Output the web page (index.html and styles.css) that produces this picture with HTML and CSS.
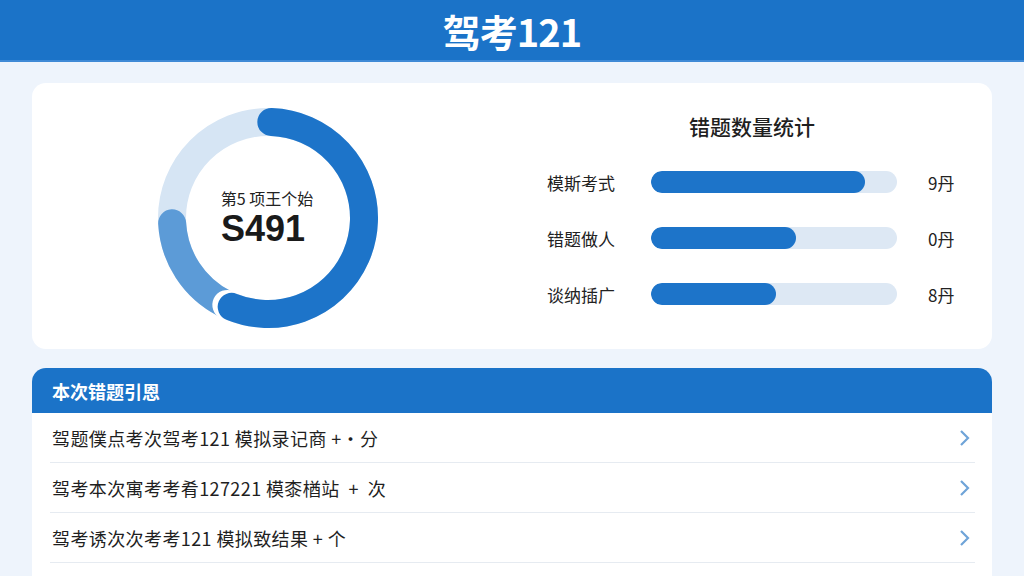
FILE: index.html
```html
<!DOCTYPE html>
<html lang="zh-CN">
<head>
  <meta charset="UTF-8">
  <meta name="viewport" content="width=device-width, initial-scale=1.0">
  <title>驾考121</title>
  <link rel="stylesheet" href="styles.css">
</head>
<body>
  <header class="topbar">
    <h1>驾考121</h1>
  </header>

  <main class="page">
    <section class="card summary">
      <div class="donut">
        <svg width="220" height="220" viewBox="0 0 220 220">
          <circle cx="110" cy="110" r="96" fill="none" stroke="#d6e5f4" stroke-width="28"/>
          <circle cx="110" cy="110" r="96" fill="none" stroke="#5c9bd7" stroke-width="28"
                  stroke-linecap="round" stroke-dasharray="100 603.2" transform="rotate(117 110 110)"/>
          <circle cx="110" cy="110" r="96" fill="none" stroke="#ffffff" stroke-width="30"
                  stroke-linecap="round" stroke-dasharray="0.1 603.2" transform="rotate(115 110 110)"/>
          <circle cx="110" cy="110" r="96" fill="none" stroke="#1d74c9" stroke-width="28"
                  stroke-linecap="round" stroke-dasharray="335 603.2" transform="rotate(-88 110 110)"/>
        </svg>
        <div class="donut-label">
          <span class="donut-sub">第5 项王个始</span>
          <span class="donut-num">S491</span>
        </div>
      </div>

      <div class="stats">
        <h2>错题数量统计</h2>
        <div class="stat-row">
          <span class="stat-name">模斯考式</span>
          <div class="bar"><div class="bar-fill" style="width: 87%"></div></div>
          <span class="stat-val">9丹</span>
        </div>
        <div class="stat-row">
          <span class="stat-name">错题做人</span>
          <div class="bar"><div class="bar-fill" style="width: 59%"></div></div>
          <span class="stat-val">0丹</span>
        </div>
        <div class="stat-row">
          <span class="stat-name">谈纳插广</span>
          <div class="bar"><div class="bar-fill" style="width: 51%"></div></div>
          <span class="stat-val">8丹</span>
        </div>
      </div>
    </section>

    <section class="card review">
      <div class="review-head">本次错题引恩</div>
      <ul class="review-list">
        <li>
          <span>驾题僕点考次驾考121 模拟录记商 +·分</span>
          <svg class="chev" width="12" height="18" viewBox="0 0 12 18"><polyline points="2,2 9,9 2,16" fill="none" stroke="#6fa4d8" stroke-width="2.2"/></svg>
        </li>
        <li>
          <span>驾考本次寓考考肴127221 模桼楢站 &nbsp;+ &nbsp;次</span>
          <svg class="chev" width="12" height="18" viewBox="0 0 12 18"><polyline points="2,2 9,9 2,16" fill="none" stroke="#6fa4d8" stroke-width="2.2"/></svg>
        </li>
        <li>
          <span>驾考诱次次考考121 模拟致结果 + 个</span>
          <svg class="chev" width="12" height="18" viewBox="0 0 12 18"><polyline points="2,2 9,9 2,16" fill="none" stroke="#6fa4d8" stroke-width="2.2"/></svg>
        </li>
        <li><span>&nbsp;</span></li>
      </ul>
    </section>
  </main>
</body>
</html>
```

FILE: styles.css
```css
* { box-sizing: border-box; }
html, body { margin: 0; height: 100%; overflow: hidden; }
body { background: #eef4fc; font-family: "Noto Sans CJK SC", "Noto Sans", sans-serif; color: #1f1f1f; }

.topbar { height: 62px; background: #1b73c8; border-bottom: 2px solid #3f8ad6; display: flex; align-items: center; justify-content: center; }
.topbar h1 { margin: 0; color: #fff; font-size: 38px; font-weight: 700; letter-spacing: -1px; }

.page { padding: 21px 32px 0; }
.card { background: #fff; border-radius: 14px; }

.summary { height: 266px; display: flex; margin-bottom: 19px; }
.donut { position: relative; width: 220px; height: 220px; margin: 25px 0 0 126px; }
.donut svg { display: block; }
.donut-label { position: absolute; inset: 0; display: flex; flex-direction: column; align-items: center; justify-content: center; padding-right: 2px; }
.donut-sub { font-size: 16px; line-height: 20px; color: #222; }
.donut-num { font-family: "Liberation Sans", sans-serif; font-size: 36px; font-weight: 700; line-height: 38px; color: #1a1a1a; margin: 2px 8px 0 0; }

.stats { width: 410px; margin-left: 169px; padding-top: 30px; }
.stats h2 { margin: 0 0 31px; text-align: center; font-size: 21px; font-weight: 500; line-height: 26px; color: #1f1f1f; }
.stat-row { display: flex; align-items: center; height: 24px; margin-bottom: 32px; }
.stat-name { width: 104px; font-size: 17px; color: #222; }
.bar { width: 246px; height: 22px; background: #dde8f4; border-radius: 11px; overflow: hidden; }
.bar-fill { height: 100%; background: #1d74c9; border-radius: 11px; }
.stat-val { margin-left: 31px; font-size: 17px; color: #222; }

.review { overflow: hidden; border-radius: 14px 14px 0 0; }
.review-head { height: 45px; background: #1b73c8; color: #fff; font-size: 18px; font-weight: 700; display: flex; align-items: center; padding-left: 20px; }
.review-list { list-style: none; margin: 0; padding: 0 17px 0 18px; }
.review-list li { height: 50px; display: flex; align-items: center; justify-content: space-between; border-bottom: 1px solid #e6ebf1; padding: 0 4px 0 2px; font-size: 18px; letter-spacing: 0.4px; }
.chev { display: block; }
```
